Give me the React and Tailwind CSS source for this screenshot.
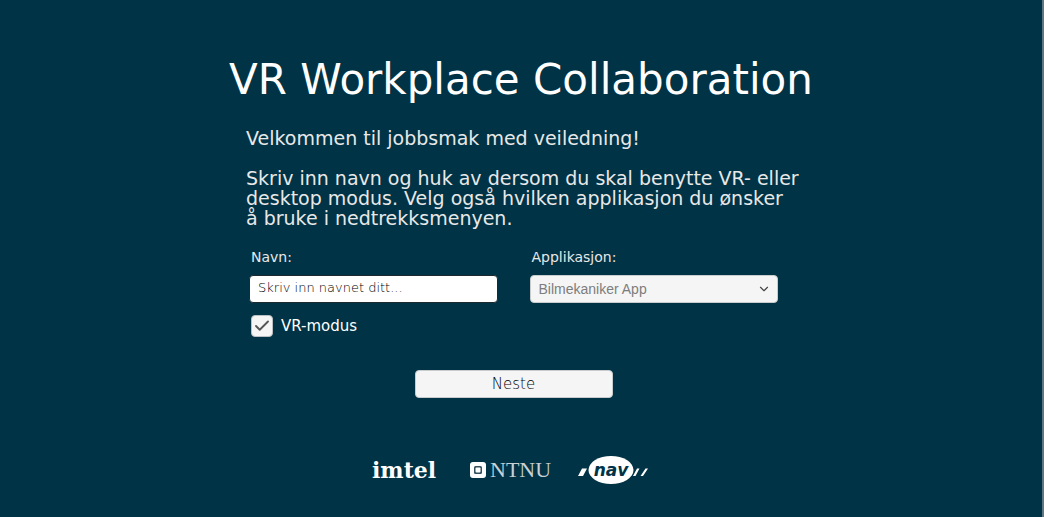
import React from "react";
import { Check, ChevronDown } from "lucide-react";

function ImtelLogo() {
  return (
    <span className="w-[70px] font-['DejaVu_Serif'] text-[22px] leading-5 font-black text-white">
      imtel
    </span>
  );
}

function NtnuLogo() {
  return (
    <div className="flex w-20 items-center gap-1">
      <svg className="size-4 shrink-0" viewBox="0 0 16 16" aria-hidden="true">
        <rect width="16" height="16" rx="3" fill="#fff" />
        <rect x="4" y="4" width="8" height="8" rx="1.500" fill="#33505c" />
        <rect x="5.500" y="5.500" width="5" height="5" rx="1" fill="#fff" />
      </svg>
      <span className="font-['Liberation_Serif'] text-[22px] leading-6 text-[#c9d0d3]">NTNU</span>
    </div>
  );
}

function NavLogo() {
  return (
    <svg className="h-7 w-[70px]" viewBox="0 0 70 28" role="img" aria-label="nav">
      <path d="M0 20 4 12.500H9L5 20ZM55 20 59 12.500H61.500L57.500 20ZM62.500 20 67.500 12.500H70L65 20Z" fill="#fff" />
      <ellipse cx="33" cy="14" rx="22.500" ry="14" fill="#fff" />
      <text x="33" y="20" textAnchor="middle" fontFamily="DejaVu Sans" fontSize="17" fontWeight="700" fontStyle="italic" fill="#003346">
        nav
      </text>
    </svg>
  );
}

export default function App() {
  return (
    <div className="min-h-screen border-r-2 border-[#5f7780] bg-[#003346] px-4 pt-14 pb-8 font-['DejaVu_Sans',sans-serif] text-[#e8e8e8]">
      <h1 className="text-center text-[42px] leading-12 text-white">VR Workplace Collaboration</h1>

      <main className="mx-auto mt-6 max-w-[550px]">
        <div className="text-[19px] leading-5 sm:whitespace-nowrap">
          <p>Velkommen til jobbsmak med veiledning!</p>
          <p className="mt-5">
            Skriv inn navn og huk av dersom du skal benytte VR- eller
            <br />
            desktop modus. Velg også hvilken applikasjon du ønsker
            <br />å bruke i nedtrekksmenyen.
          </p>
        </div>

        <form className="mt-[19px] pr-[18px] pl-[3px]" onSubmit={(e) => e.preventDefault()}>
          <div className="grid grid-cols-2 gap-8">
            <div>
              <label htmlFor="navn" className="block px-0.5 text-sm leading-5 font-medium">
                Navn:
              </label>
              <input
                id="navn"
                type="text"
                placeholder="Skriv inn navnet ditt..."
                className="mt-2 block h-7 w-full rounded border border-[#1c2a30] bg-white px-2 pb-1 text-[13px] font-extralight text-black outline-none placeholder:text-black"
              />
              <label className="mt-[11px] flex items-center gap-2 text-[15px] leading-6 text-white">
                <span className="relative ml-0.5 size-[22px]">
                  <input
                    type="checkbox"
                    defaultChecked
                    className="peer block size-[22px] appearance-none rounded border border-[#b9bfc2] bg-[#f5f5f5]"
                  />
                  <Check
                    className="pointer-events-none absolute inset-0 m-auto hidden size-[18px] text-[#555] peer-checked:block"
                    strokeWidth={2.5}
                  />
                </span>
                VR-modus
              </label>
            </div>
            <div>
              <label htmlFor="applikasjon" className="block px-0.5 text-sm leading-5 font-medium">
                Applikasjon:
              </label>
              <div className="relative mt-2">
                <select
                  id="applikasjon"
                  className="block h-7 w-full appearance-none rounded border border-[#c8cccd] bg-[#f5f5f5] px-2 font-['Liberation_Sans',sans-serif] text-sm text-[#7d7d7d]"
                >
                  <option>Bilmekaniker App</option>
                </select>
                <ChevronDown
                  className="pointer-events-none absolute inset-y-0 right-[7px] my-auto size-[14px] text-[#444]"
                  strokeWidth={2}
                />
              </div>
            </div>
          </div>

          <button
            type="submit"
            className="mx-auto mt-8 block h-7 w-[198px] rounded border border-[#c8cccd] bg-[#f5f5f5] text-[15px] font-extralight text-black"
          >
            Neste
          </button>
        </form>

        <footer className="mt-[58px] flex items-center justify-center gap-7 pr-[22px]">
          <ImtelLogo />
          <NtnuLogo />
          <NavLogo />
        </footer>
      </main>
    </div>
  );
}
